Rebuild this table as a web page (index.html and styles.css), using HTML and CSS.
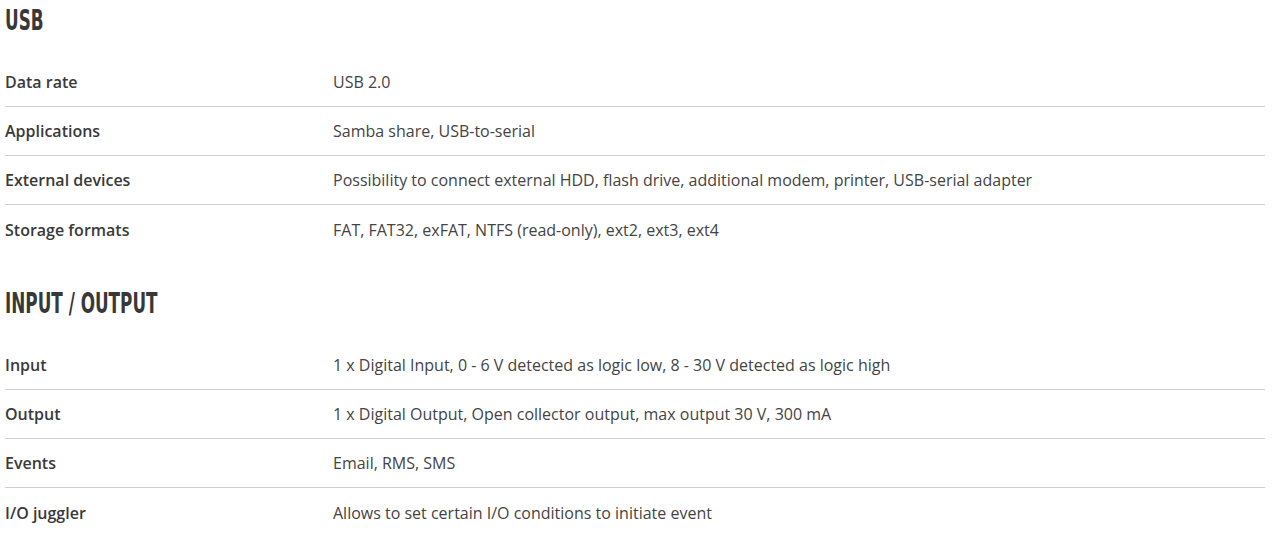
FILE: index.html
```html
<!DOCTYPE html>
<html>
<head>
<meta charset="utf-8">
<link rel="stylesheet" href="styles.css">
</head>
<body>
<div class="specs">
  <section class="group">
    <h2 class="group-title"><span class="title-text">USB</span></h2>
    <div class="rows">
      <div class="row"><div class="label">Data rate</div><div class="value">USB 2.0</div></div>
      <div class="row"><div class="label">Applications</div><div class="value">Samba share, USB-to-serial</div></div>
      <div class="row"><div class="label">External devices</div><div class="value">Possibility to connect external HDD, flash drive, additional modem, printer, USB-serial adapter</div></div>
      <div class="row"><div class="label">Storage formats</div><div class="value">FAT, FAT32, exFAT, NTFS (read-only), ext2, ext3, ext4</div></div>
    </div>
  </section>
  <section class="group">
    <h2 class="group-title"><span class="title-text">INPUT / OUTPUT</span></h2>
    <div class="rows">
      <div class="row"><div class="label">Input</div><div class="value">1 x Digital Input, 0 - 6 V detected as logic low, 8 - 30 V detected as logic high</div></div>
      <div class="row"><div class="label">Output</div><div class="value">1 x Digital Output, Open collector output, max output 30 V, 300 mA</div></div>
      <div class="row"><div class="label">Events</div><div class="value">Email, RMS, SMS</div></div>
      <div class="row"><div class="label">I/O juggler</div><div class="value">Allows to set certain I/O conditions to initiate event</div></div>
    </div>
  </section>
</div>
</body>
</html>
```
FILE: styles.css
```css
html, body {
  margin: 0;
  padding: 0;
  background: #fff;
}
body {
  font-family: "Open Sans", "Liberation Sans", sans-serif;
  font-size: 16px;
  color: #404040;
}
.specs {
  padding: 0 7px 0 5px;
}
.group + .group {
  margin-top: 29px;
}
.group-title {
  margin: 0;
  height: 40px;
  line-height: 40px;
  font-family: "DejaVu Sans", sans-serif;
  font-weight: 700;
  font-size: 29px;
  color: #383838;
}
.title-text {
  display: inline-block;
  transform: scaleX(0.58);
  transform-origin: left center;
}
.rows {
  margin-top: 18px;
}
.row {
  display: grid;
  grid-template-columns: 328px 1fr;
  height: 49px;
  align-items: center;
  border-bottom: 1px solid #cfcfcf;
  box-sizing: border-box;
}
.row:last-child {
  border-bottom: none;
}
.label {
  font-weight: 600;
  color: #3a3a3a;
}
.value {
  color: #444;
}
```
